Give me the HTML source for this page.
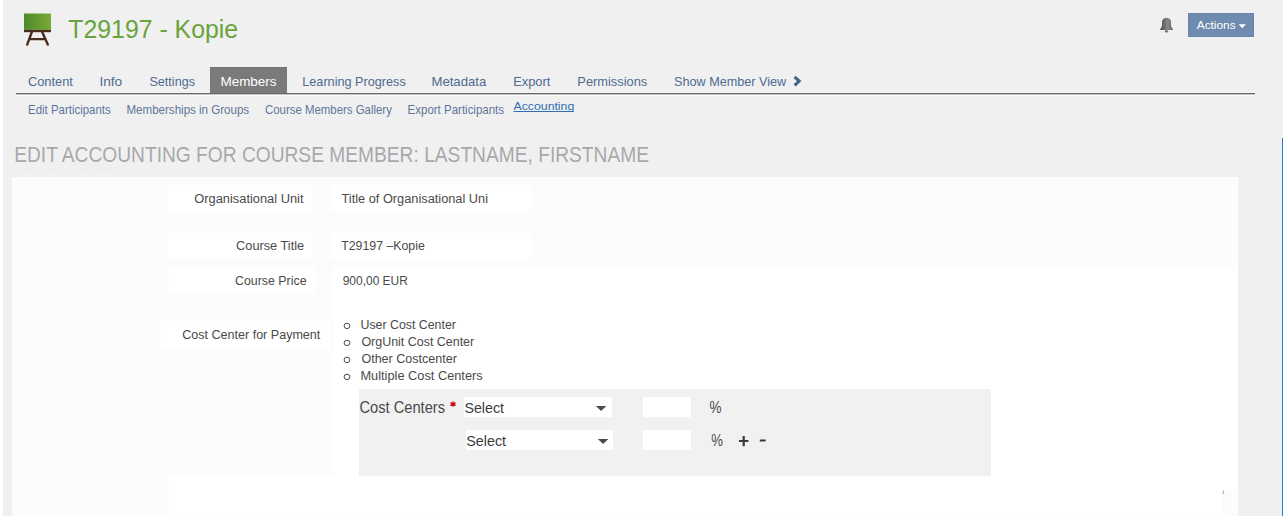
<!DOCTYPE html>
<html><head><meta charset="utf-8"><title>Edit Accounting</title>
<style>
html,body{margin:0;padding:0;}
body{width:1283px;height:516px;overflow:hidden;position:relative;background:#f0f0f0;font-family:"Liberation Sans",sans-serif;}
svg{position:absolute;left:0;top:0;}
text{font-family:"Liberation Sans",sans-serif;}
</style></head><body>
<div style="position:absolute;left:0px;top:0px;width:3.00px;height:516.00px;background:#ffffff"></div><div style="position:absolute;left:12px;top:177px;width:1226.00px;height:339.00px;background:#fcfcfc"></div><div style="position:absolute;left:333px;top:266px;width:905.00px;height:224.00px;background:#ffffff"></div><div style="position:absolute;left:169px;top:476px;width:1053.00px;height:38.00px;background:#ffffff"></div><div style="position:absolute;left:166.5px;top:184.7px;width:146.50px;height:26.60px;background:#ffffff"></div><div style="position:absolute;left:331px;top:184.7px;width:200.00px;height:26.30px;background:#ffffff"></div><div style="position:absolute;left:166.5px;top:232.6px;width:146.50px;height:25.90px;background:#ffffff"></div><div style="position:absolute;left:331px;top:232.5px;width:200.00px;height:26.00px;background:#ffffff"></div><div style="position:absolute;left:169px;top:267px;width:146.00px;height:26.60px;background:#ffffff"></div><div style="position:absolute;left:161px;top:320.5px;width:170.00px;height:27.30px;background:#ffffff"></div><div style="position:absolute;left:358.7px;top:388.9px;width:632.20px;height:86.90px;background:#f1f1f1"></div><div style="position:absolute;left:463.5px;top:396.8px;width:148.40px;height:20.20px;background:#ffffff"></div><div style="position:absolute;left:465.8px;top:429.8px;width:147.20px;height:20.00px;background:#ffffff"></div><div style="position:absolute;left:643.1px;top:396.9px;width:48.00px;height:20.10px;background:#ffffff"></div><div style="position:absolute;left:643.1px;top:429.8px;width:48.00px;height:20.10px;background:#ffffff"></div><div style="position:absolute;left:210px;top:67px;width:77.00px;height:26.00px;background:#7a7a7a"></div><div style="position:absolute;left:210px;top:67px;width:77.00px;height:1.00px;background:#707070"></div><div style="position:absolute;left:287px;top:92px;width:967.50px;height:1.00px;background:#f7f7f7"></div><div style="position:absolute;left:16px;top:92px;width:194.00px;height:1.00px;background:#f7f7f7"></div><div style="position:absolute;left:16px;top:93px;width:1238.50px;height:1.00px;background:#686868"></div><div style="position:absolute;left:16px;top:94px;width:1238.50px;height:1.00px;background:#c4c4c4"></div><div style="position:absolute;left:16px;top:95px;width:1238.50px;height:1.00px;background:#fafafa"></div><div style="position:absolute;left:1188.3px;top:13.2px;width:66.00px;height:23.50px;background:#6585ab"></div><div style="position:absolute;left:1189.3px;top:14.2px;width:64.00px;height:21.50px;background:#6f8bb0"></div><div style="position:absolute;left:1282px;top:138px;width:1.00px;height:378.00px;background:#1f80d6"></div>
<svg width="1283" height="516" viewBox="0 0 1283 516">

<defs>
 <linearGradient id="gb" x1="0" x2="1" y1="0" y2="0"><stop offset="0" stop-color="#4f8a2b"/><stop offset="1" stop-color="#78aa35"/></linearGradient>
 <linearGradient id="bell" x1="0" x2="1" y1="0" y2="0"><stop offset="0" stop-color="#4a4a4a"/><stop offset="0.6" stop-color="#8a8a8a"/><stop offset="1" stop-color="#5a5a5a"/></linearGradient>
</defs>
<rect x="24" y="13.5" width="27" height="16.4" fill="url(#gb)"/>
<rect x="24" y="29.9" width="27" height="2.3" fill="#4a2c1f"/>
<path d="M31.8 32 L27.2 44.6 M42.2 32 L47.8 44.6 M29.6 39.1 L45.4 39.1" stroke="#4a2c1f" stroke-width="2.4" stroke-linecap="round" fill="none"/>
<path d="M1160 30 C1160 28.5 1162 27.5 1162 25 L1162 22 C1162 19.5 1164 17.8 1166.5 17.8 C1169 17.8 1171 19.5 1171 22 L1171 25 C1171 27.5 1173 28.5 1173 30 Z" fill="url(#bell)"/>
<ellipse cx="1166.5" cy="31.3" rx="1.6" ry="1.4" fill="#777"/>
<path d="M1238.6 24.2 L1245.9 24.2 L1242.25 28.3 Z" fill="#ffffff"/>
<path d="M794.6 76.8 L799.2 81.1 L794.6 85.4" stroke="#46628a" stroke-width="3" stroke-linecap="butt" fill="none"/>
<path d="M1223.5 490 V493.5 H1222" stroke="#b8b8b8" stroke-width="1" fill="none"/>
<rect x="513.5" y="111" width="60.3" height="1" fill="#2f6fb5"/>
<path d="M14 168.5 H114" stroke="#eaeaea" stroke-width="1" stroke-dasharray="7 4 9 3 6 5"/>
<ellipse cx="347" cy="325.9" rx="2.9" ry="2.7" stroke="#4a4a4a" stroke-width="1" fill="none"/>
<ellipse cx="347" cy="342.9" rx="2.9" ry="2.7" stroke="#4a4a4a" stroke-width="1" fill="none"/>
<ellipse cx="347" cy="359.9" rx="2.9" ry="2.7" stroke="#4a4a4a" stroke-width="1" fill="none"/>
<ellipse cx="347" cy="376.9" rx="2.9" ry="2.7" stroke="#4a4a4a" stroke-width="1" fill="none"/>
<path d="M453 401.2 L453 406.8 M450.4 402.6 L455.6 405.4 M455.6 402.6 L450.4 405.4" stroke="#c8101a" stroke-width="1.3" fill="none"/><rect x="451.5" y="403" width="3" height="2" fill="#d00010"/>
<path d="M595.8 406.1 L606.4 406.1 L601.1 411 Z" fill="#4a4a4a"/>
<path d="M597.8 439.1 L608.4 439.1 L603.1 444 Z" fill="#4a4a4a"/>
<path d="M739 441 L748.4 441 M743.7 436 L743.7 446.2" stroke="#3a3a3a" stroke-width="2.2" fill="none"/>
<path d="M759.8 440.5 L765.7 440.5" stroke="#3a3a3a" stroke-width="2" fill="none"/>

<text x="68.30" y="37.70" font-size="26.2" fill="#68a33c" font-weight="normal" textLength="169.84" lengthAdjust="spacingAndGlyphs">T29197 - Kopie</text><text x="27.90" y="86.00" font-size="12.4" fill="#4f6b8f" font-weight="normal" textLength="45.02" lengthAdjust="spacingAndGlyphs">Content</text><text x="99.40" y="86.00" font-size="12.4" fill="#4f6b8f" font-weight="normal" textLength="22.78" lengthAdjust="spacingAndGlyphs">Info</text><text x="149.40" y="86.00" font-size="12.4" fill="#4f6b8f" font-weight="normal" textLength="45.60" lengthAdjust="spacingAndGlyphs">Settings</text><text x="220.41" y="86.00" font-size="12.4" fill="#ffffff" font-weight="normal" textLength="56.20" lengthAdjust="spacingAndGlyphs">Members</text><text x="302.28" y="86.00" font-size="12.4" fill="#4f6b8f" font-weight="normal" textLength="103.52" lengthAdjust="spacingAndGlyphs">Learning Progress</text><text x="431.44" y="86.00" font-size="12.4" fill="#4f6b8f" font-weight="normal" textLength="54.85" lengthAdjust="spacingAndGlyphs">Metadata</text><text x="513.16" y="86.00" font-size="12.4" fill="#4f6b8f" font-weight="normal" textLength="37.26" lengthAdjust="spacingAndGlyphs">Export</text><text x="577.37" y="86.00" font-size="12.4" fill="#4f6b8f" font-weight="normal" textLength="69.84" lengthAdjust="spacingAndGlyphs">Permissions</text><text x="674.00" y="86.00" font-size="12.4" fill="#4f6b8f" font-weight="normal" textLength="112.25" lengthAdjust="spacingAndGlyphs">Show Member View</text><text x="28.05" y="113.50" font-size="11.9" fill="#5f769b" font-weight="normal" textLength="82.60" lengthAdjust="spacingAndGlyphs">Edit Participants</text><text x="126.50" y="113.50" font-size="11.9" fill="#5f769b" font-weight="normal" textLength="122.65" lengthAdjust="spacingAndGlyphs">Memberships in Groups</text><text x="265.00" y="113.50" font-size="11.9" fill="#5f769b" font-weight="normal" textLength="126.85" lengthAdjust="spacingAndGlyphs">Course Members Gallery</text><text x="407.60" y="113.50" font-size="11.9" fill="#5f769b" font-weight="normal" textLength="96.45" lengthAdjust="spacingAndGlyphs">Export Participants</text><text x="513.50" y="110.00" font-size="11.6" fill="#2f6fb5" font-weight="normal" textLength="60.77" lengthAdjust="spacingAndGlyphs">Accounting</text><text x="14.20" y="161.50" font-size="21.2" fill="#a8a8ab" font-weight="normal" textLength="634.82" lengthAdjust="spacingAndGlyphs">EDIT ACCOUNTING FOR COURSE MEMBER: LASTNAME, FIRSTNAME</text><text x="1196.80" y="29.20" font-size="11.7" fill="#ffffff" font-weight="normal" textLength="38.74" lengthAdjust="spacingAndGlyphs">Actions</text><text x="194.30" y="203.40" font-size="13.7" fill="#4a4a4a" font-weight="normal" textLength="109.22" lengthAdjust="spacingAndGlyphs">Organisational Unit</text><text x="341.50" y="203.40" font-size="13.7" fill="#4a4a4a" font-weight="normal" textLength="146.54" lengthAdjust="spacingAndGlyphs">Title of Organisational Uni</text><text x="236.10" y="250.00" font-size="13.7" fill="#4a4a4a" font-weight="normal" textLength="68.07" lengthAdjust="spacingAndGlyphs">Course Title</text><text x="341.20" y="250.00" font-size="13.7" fill="#4a4a4a" font-weight="normal" textLength="83.65" lengthAdjust="spacingAndGlyphs">T29197 –Kopie</text><text x="235.00" y="284.50" font-size="13.7" fill="#4a4a4a" font-weight="normal" textLength="71.55" lengthAdjust="spacingAndGlyphs">Course Price</text><text x="342.70" y="284.50" font-size="13.7" fill="#4a4a4a" font-weight="normal" textLength="65.20" lengthAdjust="spacingAndGlyphs">900,00 EUR</text><text x="182.20" y="339.00" font-size="13.7" fill="#4a4a4a" font-weight="normal" textLength="138.12" lengthAdjust="spacingAndGlyphs">Cost Center for Payment</text><text x="360.50" y="328.70" font-size="13.7" fill="#4a4a4a" font-weight="normal" textLength="95.40" lengthAdjust="spacingAndGlyphs">User Cost Center</text><text x="361.40" y="345.70" font-size="13.7" fill="#4a4a4a" font-weight="normal" textLength="112.80" lengthAdjust="spacingAndGlyphs">OrgUnit Cost Center</text><text x="361.40" y="362.70" font-size="13.7" fill="#4a4a4a" font-weight="normal" textLength="95.59" lengthAdjust="spacingAndGlyphs">Other Costcenter</text><text x="360.47" y="379.70" font-size="13.7" fill="#4a4a4a" font-weight="normal" textLength="122.19" lengthAdjust="spacingAndGlyphs">Multiple Cost Centers</text><text x="359.40" y="413.00" font-size="15.8" fill="#4a4a4a" font-weight="normal" textLength="85.71" lengthAdjust="spacingAndGlyphs">Cost Centers</text><text x="464.40" y="413.00" font-size="15.3" fill="#3c3c3c" font-weight="normal" textLength="39.70" lengthAdjust="spacingAndGlyphs">Select</text><text x="466.30" y="446.00" font-size="15.3" fill="#3c3c3c" font-weight="normal" textLength="39.70" lengthAdjust="spacingAndGlyphs">Select</text><text x="709.50" y="412.60" font-size="16" fill="#4a4a4a" font-weight="normal" textLength="11.99" lengthAdjust="spacingAndGlyphs">%</text><text x="711.20" y="445.80" font-size="16" fill="#4a4a4a" font-weight="normal" textLength="11.69" lengthAdjust="spacingAndGlyphs">%</text>
</svg>
</body></html>
